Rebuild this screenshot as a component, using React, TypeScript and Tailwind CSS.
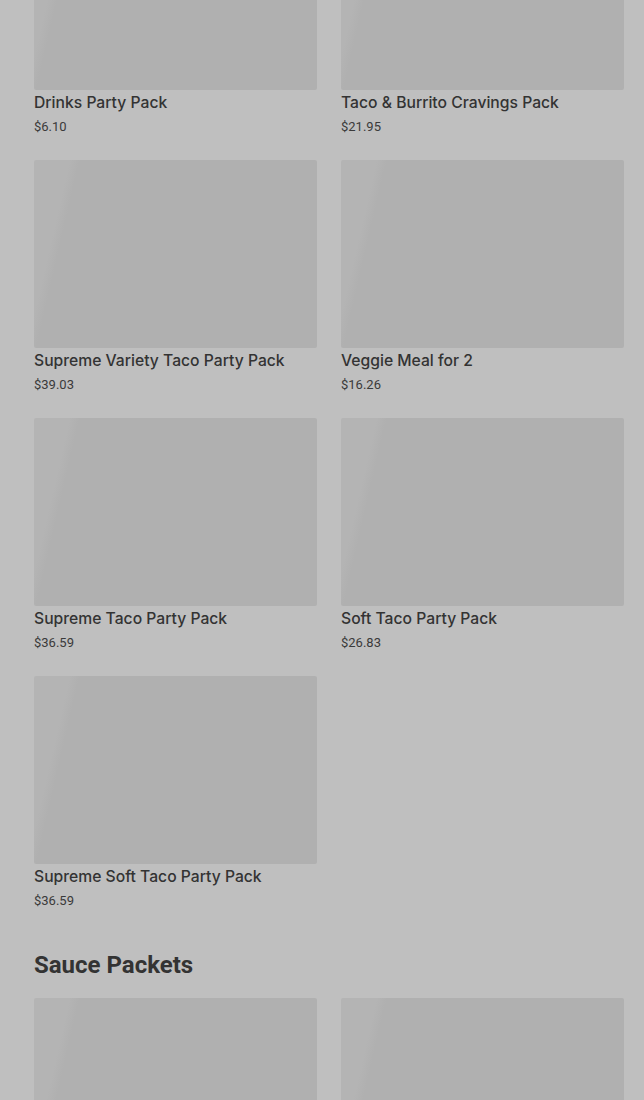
import React from "react";

type Product = { name: string; price: string };

const partyPacks: Product[] = [
  { name: "Drinks Party Pack", price: "$6.10" },
  { name: "Taco & Burrito Cravings Pack", price: "$21.95" },
  { name: "Supreme Variety Taco Party Pack", price: "$39.03" },
  { name: "Veggie Meal for 2", price: "$16.26" },
  { name: "Supreme Taco Party Pack", price: "$36.59" },
  { name: "Soft Taco Party Pack", price: "$26.83" },
  { name: "Supreme Soft Taco Party Pack", price: "$36.59" },
];

// loading placeholder, shimmer band on the left
function ImageSkeleton() {
  return (
    <div className="h-[188px] w-full rounded-[2px] bg-[linear-gradient(103deg,#b4b4b4_0%,#b4b4b4_11%,#b0b0b0_14%,#b0b0b0_100%)]" />
  );
}

function ProductCard({ product }: { product: Product }) {
  return (
    <div className="flex flex-col">
      <ImageSkeleton />
      <p className="mt-px text-[15.7px] leading-6 font-medium text-[#333] font-['Inter',sans-serif]">
        {product.name}
      </p>
      <p className="mt-px text-[13px] leading-[21px] text-[#3a3a3a]">{product.price}</p>
    </div>
  );
}

export default function App() {
  return (
    <div className="h-[1100px] overflow-hidden bg-[#bfbfbf] pl-[34px] pr-[20px] font-['Roboto','Liberation_Sans',sans-serif]">
      <div className="-mt-[98px] grid grid-cols-2 gap-x-6 gap-y-[23px]">
        {partyPacks.map((p) => (
          <ProductCard key={p.name} product={p} />
        ))}
      </div>

      <h2 className="mt-[38px] text-[24px] leading-8 font-bold text-[#333]">Sauce Packets</h2>

      <div className="mt-[17px] grid grid-cols-2 gap-x-6">
        <ImageSkeleton />
        <ImageSkeleton />
      </div>
    </div>
  );
}
